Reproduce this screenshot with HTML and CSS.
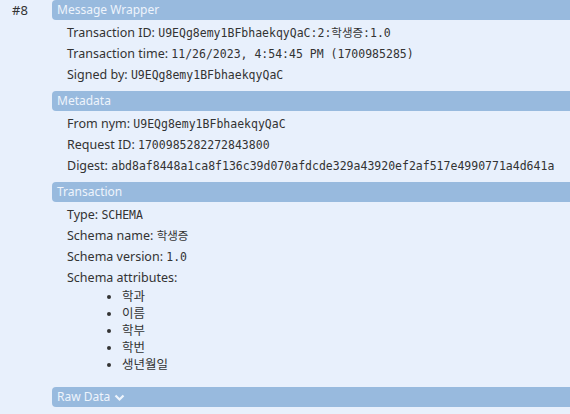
FILE: index.html
```html
<!DOCTYPE html>
<html>
<head>
<meta charset="utf-8">
<link rel="stylesheet" href="styles.css">
</head>
<body>
<div class="txn">
  <div class="num">#8</div>
  <div class="body">
    <div class="section">
      <div class="head">Message Wrapper</div>
      <div class="rows">
        <div class="row">Transaction ID: <span class="mono">U9EQg8emy1BFbhaekqyQaC:2:학생증:1.0</span></div>
        <div class="row">Transaction time: <span class="mono">11/26/2023, 4:54:45 PM (1700985285)</span></div>
        <div class="row">Signed by: <span class="mono">U9EQg8emy1BFbhaekqyQaC</span></div>
      </div>
    </div>
    <div class="section">
      <div class="head">Metadata</div>
      <div class="rows">
        <div class="row">From nym: <span class="mono">U9EQg8emy1BFbhaekqyQaC</span></div>
        <div class="row">Request ID: <span class="mono">1700985282272843800</span></div>
        <div class="row">Digest: <span class="mono">abd8af8448a1ca8f136c39d070afdcde329a43920ef2af517e4990771a4d641a</span></div>
      </div>
    </div>
    <div class="section">
      <div class="head">Transaction</div>
      <div class="rows">
        <div class="row">Type: <span class="mono">SCHEMA</span></div>
        <div class="row">Schema name: <span class="mono">학생증</span></div>
        <div class="row">Schema version: <span class="mono">1.0</span></div>
        <div class="row">Schema attributes:</div>
        <ul class="attrs">
          <li>학과</li>
          <li>이름</li>
          <li>학부</li>
          <li>학번</li>
          <li>생년월일</li>
        </ul>
      </div>
    </div>
    <div class="section">
      <div class="head">Raw Data <svg class="chev" width="11" height="8" viewBox="0 0 11 8"><path d="M1.5 1.5 L5.5 5.5 L9.5 1.5" fill="none" stroke="currentColor" stroke-width="2.2"/></svg></div>
    </div>
  </div>
</div>
</body>
</html>
```
FILE: styles.css
```css
html, body {
  margin: 0;
  padding: 0;
  background: #e8f0fc;
}
body {
  font-family: "Noto Sans", "Noto Sans CJK KR", sans-serif;
  font-size: 12.5px;
  color: #333;
  overflow: hidden;
}
.txn {
  display: flex;
}
.num {
  width: 40px;
  flex: none;
  padding-left: 12px;
  font-size: 13px;
  line-height: 20px;
}
.body {
  flex: 1;
  min-width: 0;
}
.section {
  margin-bottom: 6px;
}
.head {
  background: #98bade;
  color: #eef4fc;
  height: 20px;
  line-height: 20px;
  padding-left: 5px;
  border-radius: 4px 0 0 4px;
  font-size: 12px;
  display: flex;
  align-items: center;
  gap: 4px;
}
.chev {
  display: block;
  margin-top: 1px;
}
.rows {
  padding-left: 15px;
  padding-top: 2px;
}
.row {
  height: 21px;
  line-height: 21px;
  white-space: nowrap;
}
.mono {
  font-family: "DejaVu Sans Mono", "Noto Sans CJK KR", monospace;
  font-size: 11.5px;
  line-height: 1;
}
.attrs {
  margin: 0;
  padding-left: 55px;
  padding-bottom: 8px;
}
.attrs li {
  height: 17px;
  line-height: 17px;
}
```
